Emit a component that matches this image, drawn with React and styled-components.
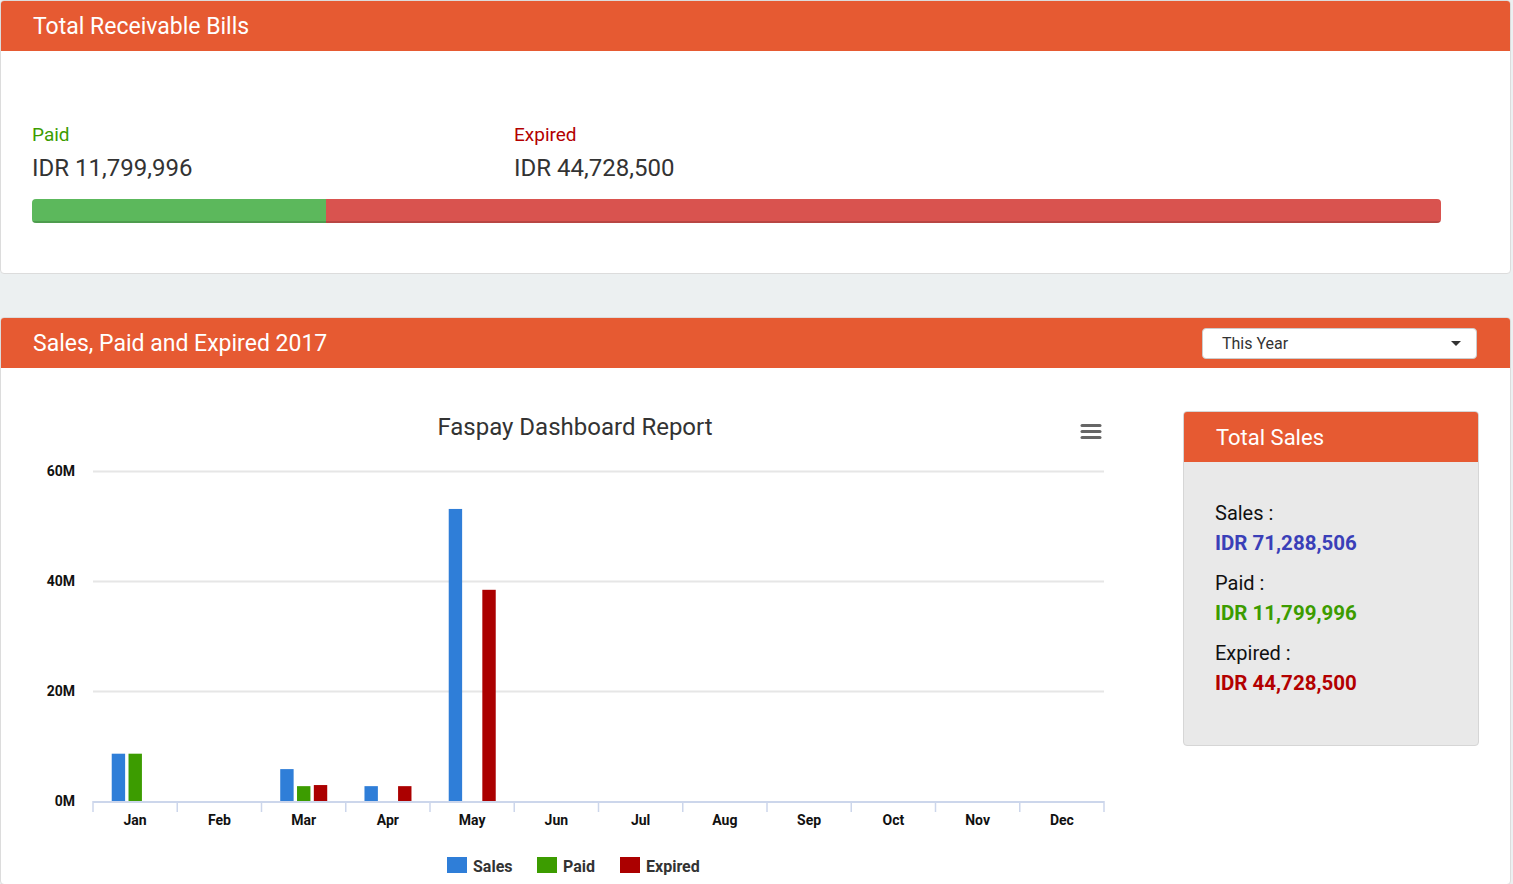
import React from 'react';
import styled, { createGlobalStyle } from 'styled-components';

const GlobalStyle = createGlobalStyle`
  body {
    margin: 0;
    background: #ecf0f1;
    font-family: Roboto, "Open Sans", sans-serif;
  }
`;

const ORANGE = '#e65a32';

const Page = styled.div`
  display: flex;
  flex-direction: column;
  gap: 43px;
  padding: 0 2px 0 0;
`;

const Panel = styled.section`
  background: #fff;
  border: 1px solid #dcdcdc;
  border-radius: 4px;
  overflow: hidden;
`;

const PanelHeader = styled.header`
  height: 50px;
  background: ${ORANGE};
  color: #fff;
  display: flex;
  align-items: center;
  justify-content: space-between;
  padding: 0 32px;
  font-size: 23px;
`;

const BillsBody = styled.div`
  padding: 71px 69px 50px 31px;
`;

const StatRow = styled.div`
  display: grid;
  grid-template-columns: 482px 1fr;
  margin-bottom: 14px;
`;

const StatLabel = styled.div`
  color: ${props => props.color};
  font-size: 19px;
  line-height: 26px;
  margin-bottom: 3px;
`;

const StatValue = styled.div`
  color: #333;
  font-size: 24px;
  line-height: 34px;
`;

const Progress = styled.div`
  display: flex;
  height: 24px;
  border-radius: 4px;
  overflow: hidden;
  background: #f5f5f5;
`;

const ProgressBar = styled.div`
  background: ${props => props.color};
  box-shadow: inset 0 -2px 0 rgba(0, 0, 0, 0.15);
`;

const Select = styled.div`
  width: 275px;
  height: 31px;
  box-sizing: border-box;
  background: #fff;
  border: 1px solid #ccc;
  border-radius: 4px;
  display: flex;
  align-items: center;
  justify-content: space-between;
  padding: 0 15px 0 19px;
  color: #333;
  font-size: 16px;
  margin-right: 1px;
`;

const Caret = styled.span`
  width: 0;
  height: 0;
  border-left: 5px solid transparent;
  border-right: 5px solid transparent;
  border-top: 5px solid #333;
`;

const SalesBody = styled.div`
  display: flex;
  align-items: flex-start;
  padding-right: 31px;
  height: 516px;
`;

const ChartSvg = styled.svg`
  display: block;
  flex: none;
  font-family: "Liberation Sans Narrow", Roboto, sans-serif;
`;

const TotalCard = styled.div`
  margin: 43px 0 0 auto;
  width: 296px;
  box-sizing: border-box;
  border: 1px solid #d6d6d6;
  border-radius: 4px;
  background: #e9e9e9;
  overflow: hidden;
`;

const CardHeader = styled.div`
  height: 50px;
  background: ${ORANGE};
  color: #fff;
  font-size: 22px;
  display: flex;
  align-items: center;
  padding-left: 32px;
`;

const CardBody = styled.div`
  padding: 36px 31px 47px;
  display: flex;
  flex-direction: column;
  gap: 10px;
`;

const CardItem = styled.div`
  font-size: 20px;
  line-height: 30px;
`;

const CardLabel = styled.div`
  color: #111;
`;

const CardValue = styled.div`
  color: ${props => props.color};
  font-weight: 700;
  font-size: 20.5px;
`;

const months = ['Jan', 'Feb', 'Mar', 'Apr', 'May', 'Jun', 'Jul', 'Aug', 'Sep', 'Oct', 'Nov', 'Dec'];
const data = {
  sales: [8.6, 0, 5.8, 2.7, 53.1, 0, 0, 0, 0, 0, 0, 0],
  paid: [8.6, 0, 2.7, 0, 0, 0, 0, 0, 0, 0, 0, 0],
  expired: [0, 0, 2.9, 2.7, 38.4, 0, 0, 0, 0, 0, 0, 0],
};
const series = [
  { key: 'sales', name: 'Sales', color: '#2f7ed8', offset: -23.4 },
  { key: 'paid', name: 'Paid', color: '#3c9c00', offset: -6.6 },
  { key: 'expired', name: 'Expired', color: '#ab0000', offset: 10.2 },
];

const X0 = 93;
const X1 = 1104;
const SLOT = (X1 - X0) / 12;
const Y0 = 801;
const yOf = v => Y0 - v * 5.5;

const Chart = () => (
  <ChartSvg width="1160" height="516" viewBox="1 368 1160 516">
    <text x="575" y="435" textAnchor="middle" fontSize="24" fill="#333">
      Faspay Dashboard Report
    </text>
    <g stroke="#666" strokeWidth="3" strokeLinecap="round">
      <line x1="1082" y1="425.5" x2="1100" y2="425.5" />
      <line x1="1082" y1="431.5" x2="1100" y2="431.5" />
      <line x1="1082" y1="437.5" x2="1100" y2="437.5" />
    </g>
    {[60, 40, 20].map(v => (
      <line key={v} x1={X0} y1={yOf(v) + 0.5} x2={X1} y2={yOf(v) + 0.5} stroke="#e6e6e6" strokeWidth="2" />
    ))}
    {[60, 40, 20, 0].map(v => (
      <text key={v} x="75" y={yOf(v) + 5} textAnchor="end" fontSize="14" fontWeight="700" fill="#111">
        {v}M
      </text>
    ))}
    {months.map((m, i) => {
      const c = X0 + SLOT * (i + 0.5);
      return (
        <g key={m}>
          {series.map(s =>
            data[s.key][i] > 0 ? (
              <rect
                key={s.key}
                x={c + s.offset}
                y={yOf(data[s.key][i])}
                width="13.4"
                height={Y0 - yOf(data[s.key][i])}
                fill={s.color}
              />
            ) : null
          )}
          <text x={c} y="825" textAnchor="middle" fontSize="14" fontWeight="700" fill="#111">
            {m}
          </text>
        </g>
      );
    })}
    <line x1={X0} y1={Y0 + 1} x2={X1} y2={Y0 + 1} stroke="#ccd6eb" strokeWidth="2" />
    {Array.from({ length: 13 }, (_, i) => (
      <line key={i} x1={X0 + SLOT * i} y1={Y0} x2={X0 + SLOT * i} y2={Y0 + 11} stroke="#ccd6eb" strokeWidth="1.5" />
    ))}
    {[
      { ...series[0], x: 447 },
      { ...series[1], x: 537 },
      { ...series[2], x: 620 },
    ].map(s => (
      <g key={s.key}>
        <rect x={s.x} y="857" width="20" height="16" fill={s.color} />
        <text x={s.x + 26} y="872" fontSize="16" fontWeight="700" fill="#333">
          {s.name}
        </text>
      </g>
    ))}
  </ChartSvg>
);

export default function App() {
  return (
    <>
      <GlobalStyle />
      <Page>
        <Panel>
          <PanelHeader>Total Receivable Bills</PanelHeader>
          <BillsBody>
            <StatRow>
              <div>
                <StatLabel color="#3c9c00">Paid</StatLabel>
                <StatValue>IDR 11,799,996</StatValue>
              </div>
              <div>
                <StatLabel color="#b30000">Expired</StatLabel>
                <StatValue>IDR 44,728,500</StatValue>
              </div>
            </StatRow>
            <Progress>
              <ProgressBar color="#5cb85c" style={{ width: `${(11799996 / (11799996 + 44728500)) * 100}%` }} />
              <ProgressBar color="#d9534f" style={{ flex: 1 }} />
            </Progress>
          </BillsBody>
        </Panel>
        <Panel>
          <PanelHeader>
            Sales, Paid and Expired 2017
            <Select>
              This Year
              <Caret />
            </Select>
          </PanelHeader>
          <SalesBody>
            <Chart />
            <TotalCard>
              <CardHeader>Total Sales</CardHeader>
              <CardBody>
                <CardItem>
                  <CardLabel>Sales :</CardLabel>
                  <CardValue color="#3a3fb8">IDR 71,288,506</CardValue>
                </CardItem>
                <CardItem>
                  <CardLabel>Paid :</CardLabel>
                  <CardValue color="#3c9c00">IDR 11,799,996</CardValue>
                </CardItem>
                <CardItem>
                  <CardLabel>Expired :</CardLabel>
                  <CardValue color="#b30000">IDR 44,728,500</CardValue>
                </CardItem>
              </CardBody>
            </TotalCard>
          </SalesBody>
        </Panel>
      </Page>
    </>
  );
}
